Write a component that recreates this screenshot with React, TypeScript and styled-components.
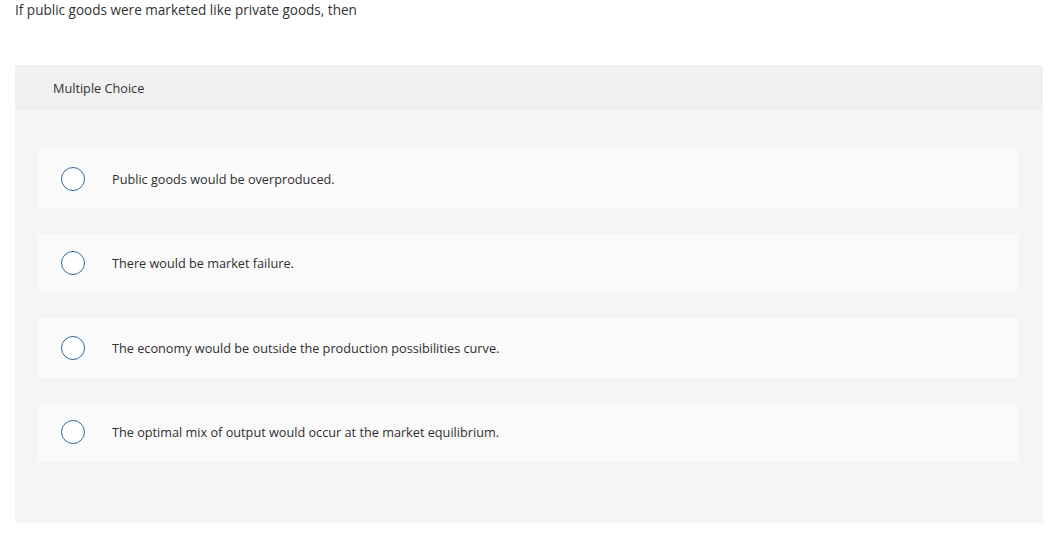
import { createGlobalStyle, styled } from 'styled-components'

const GlobalStyle = createGlobalStyle`
  html, body {
    margin: 0;
    padding: 0;
    background: #ffffff;
  }
  body {
    font-family: "Open Sans", "Liberation Sans", Arial, sans-serif;
    color: #333333;
  }
`

const Page = styled.div`
  padding: 0 9px 18px 15px;
`

const Question = styled.p`
  margin: 0;
  padding-top: 1px;
  font-size: 13.55px;
  line-height: 18px;
  color: #333333;
`

const Panel = styled.section`
  margin-top: 46px;
  background: #f5f5f5;
  border-radius: 3px;
  overflow: hidden;
`

const PanelHeader = styled.header`
  height: 45px;
  display: flex;
  align-items: center;
  padding-left: 38px;
  background: #f0f0f0;
  font-size: 12.7px;
  color: #333333;
`

const Choices = styled.div`
  display: flex;
  flex-direction: column;
  gap: 25px;
  padding: 39px 25px 61px 23px;
`

const Choice = styled.label`
  height: 59.5px;
  display: flex;
  align-items: center;
  padding-left: 23px;
  background: #fafafa;
  border-radius: 3px;
  cursor: pointer;
`

const Radio = styled.span`
  width: 22px;
  height: 22px;
  flex: none;
  border: 1.5px solid #2d6aa0;
  border-radius: 50%;
  background: #ffffff;
`

const ChoiceText = styled.span`
  margin-left: 27px;
  font-size: 12.7px;
  color: #2f2f2f;
`

const options = [
  'Public goods would be overproduced.',
  'There would be market failure.',
  'The economy would be outside the production possibilities curve.',
  'The optimal mix of output would occur at the market equilibrium.',
]

export default function App() {
  return (
    <>
      <GlobalStyle />
      <Page>
        <Question>If public goods were marketed like private goods, then</Question>
        <Panel>
          <PanelHeader>Multiple Choice</PanelHeader>
          <Choices>
            {options.map((text) => (
              <Choice key={text}>
                <Radio />
                <ChoiceText>{text}</ChoiceText>
              </Choice>
            ))}
          </Choices>
        </Panel>
      </Page>
    </>
  )
}
